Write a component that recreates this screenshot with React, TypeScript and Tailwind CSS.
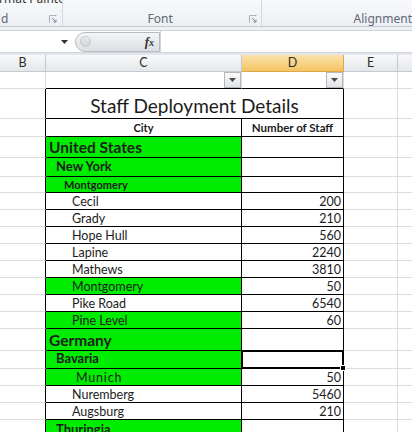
import type { ReactNode } from 'react'

type Level = 'country' | 'state' | 'sub' | 'city' | 'spaced'

interface Line {
  label: string
  value?: string
  level: Level
  h: string
  green?: boolean
  selected?: boolean
}

// Row heights are written out in full so Tailwind picks them up.
const lines: Line[] = [
  { label: 'United States', level: 'country', h: 'h-[21px]', green: true },
  { label: 'New York', level: 'state', h: 'h-[19px]', green: true },
  { label: 'Montgomery', level: 'sub', h: 'h-[16px]', green: true },
  { label: 'Cecil', value: '200', level: 'city', h: 'h-[17px]' },
  { label: 'Grady', value: '210', level: 'city', h: 'h-[17px]' },
  { label: 'Hope Hull', value: '560', level: 'city', h: 'h-[17px]' },
  { label: 'Lapine', value: '2240', level: 'city', h: 'h-[17px]' },
  { label: 'Mathews', value: '3810', level: 'city', h: 'h-[17px]' },
  { label: 'Montgomery', value: '50', level: 'city', h: 'h-[17px]', green: true },
  { label: 'Pike Road', value: '6540', level: 'city', h: 'h-[17px]' },
  { label: 'Pine Level', value: '60', level: 'city', h: 'h-[17px]', green: true },
  { label: 'Germany', level: 'country', h: 'h-[22px]', green: true },
  { label: 'Bavaria', level: 'state', h: 'h-[18px]', green: true, selected: true },
  { label: 'Munich', value: '50', level: 'spaced', h: 'h-[17px]', green: true },
  { label: 'Nuremberg', value: '5460', level: 'city', h: 'h-[17px]' },
  { label: 'Augsburg', value: '210', level: 'city', h: 'h-[17px]' },
  { label: 'Thuringia', level: 'state', h: 'h-[20px]', green: true },
]

const levelClass: Record<Level, string> = {
  country: 'pl-[3px] text-[15.5px] font-bold pb-[2px]',
  state: 'pl-[10px] text-[13px] font-bold pb-[3px]',
  sub: 'pl-[18px] text-[11px] font-bold pb-[2px]',
  city: 'pl-[26px] text-[12.5px] pb-[1px]',
  spaced: 'pl-[30px] text-[12.5px] tracking-[0.8px] pb-[1px]',
}

const cols = 'grid grid-cols-[46px_196px_102px_54px_1fr]'
const grid = 'border-r border-b border-[#dadcdd]'

function Launcher() {
  return (
    <svg width="8" height="8" viewBox="0 0 8 8" className="shrink-0">
      <path d="M0.5 7.5V0.5H7.5" fill="none" stroke="#a9b1bb" />
      <path d="M3 3L7 7M4.5 7H7V4.5" fill="none" stroke="#7d8793" />
    </svg>
  )
}

function Ribbon() {
  return (
    <div className="h-[27px] flex border-b border-[#c3cad3] bg-gradient-to-b from-[#f8f9fb] to-[#eceff3] text-[12px] leading-none text-[#5f6975] font-['Noto_Sans',sans-serif] overflow-hidden">
      <div className="w-[66px] flex flex-col border-r border-[#d2d7de] overflow-hidden">
        <div className="h-[11px] overflow-hidden">
          <div className="-mt-[7px] -ml-[1px] whitespace-nowrap text-[#333]">rmat Painter</div>
        </div>
        <div className="flex-1 flex items-center justify-between pl-[1px] pr-[5px]">
          <span>d</span>
          <Launcher />
        </div>
      </div>
      <div className="w-[210px] flex flex-col border-r border-[#d2d7de]">
        <div className="h-[11px]" />
        <div className="flex-1 flex items-center pr-[4px]">
          <span className="pl-[85px] flex-1">Font</span>
          <Launcher />
        </div>
      </div>
      <div className="flex-1 flex flex-col">
        <div className="h-[11px]" />
        <div className="flex-1 flex items-center pl-[92px] whitespace-nowrap">Alignment</div>
      </div>
    </div>
  )
}

function FormulaBar() {
  return (
    <>
      <div className="h-[3px] bg-[#eef1f4]" />
      <div className="h-[23px] flex items-center bg-white border-t border-b border-[#d0d5db]">
        <div className="w-[75px] flex justify-end pr-[7px]">
          <svg width="7" height="4" viewBox="0 0 7 4">
            <path d="M0 0H7L3.5 4Z" fill="#333" />
          </svg>
        </div>
        <div className="w-[85px] h-[20px] flex items-center justify-between rounded-l-[11px] border border-[#b7bcc3] bg-gradient-to-b from-[#f4f5f7] to-[#dcdfe3] pl-[4px] pr-[5px]">
          <div className="w-[11px] h-[11px] rounded-full border border-[#c3c7cc] bg-gradient-to-b from-[#e9ebee] to-[#cfd3d8]" />
          <span className="font-['Liberation_Serif',serif] italic font-bold text-[13px] leading-none text-[#333]">
            f<span className="text-[10px]">x</span>
          </span>
        </div>
        <div className="flex-1 h-full border-l border-[#d0d5db]" />
      </div>
      <div className="h-[2px] bg-[#e3e7ec]" />
    </>
  )
}

function ColumnHeaders() {
  const head = 'flex items-center justify-center border-r border-b border-[#c4c9cf] bg-gradient-to-b from-[#f8f9fa] to-[#e4e7eb]'
  return (
    <div className={`${cols} h-[17px] text-[12.5px] leading-none text-[#2e2e2e]`}>
      <div className={head}>B</div>
      <div className={head}>C</div>
      <div className="flex items-center justify-center border-r border-b border-[#e0a74e] bg-gradient-to-b from-[#fbe2a9] to-[#f3c561]">D</div>
      <div className={head}>E</div>
      <div className={`${head} border-r-0`} />
    </div>
  )
}

function FilterButton() {
  return (
    <div className="w-[17px] h-full flex items-center justify-center border border-[#b5b9be] bg-gradient-to-b from-[#fbfbfb] to-[#e1e3e6]">
      <svg width="7" height="4" viewBox="0 0 7 4">
        <path d="M0 0H7L3.5 4Z" fill="#4a4a4a" />
      </svg>
    </div>
  )
}

function Row({ h, children }: { h: string; children: ReactNode }) {
  return (
    <div className={`${cols} ${h}`}>
      <div className="border-r border-b border-r-black border-b-[#dadcdd]" />
      {children}
      <div className={grid} />
      <div className="border-b border-[#dadcdd]" />
    </div>
  )
}

export default function App() {
  return (
    <div className="w-[412px] h-[432px] overflow-hidden bg-white font-['Lato',sans-serif] text-[#1c1c1c]">
      <Ribbon />
      <FormulaBar />
      <ColumnHeaders />

      <div className={`${cols} h-[17px]`}>
        <div className={grid} />
        <div className="flex justify-end border-r border-b border-r-[#dadcdd] border-b-black">
          <FilterButton />
        </div>
        <div className="flex justify-end border-r border-b border-r-[#dadcdd] border-b-black">
          <FilterButton />
        </div>
        <div className={grid} />
        <div className="border-b border-[#dadcdd]" />
      </div>

      <div className={`${cols} h-[30px]`}>
        <div className="border-r border-b border-r-black border-b-[#dadcdd]" />
        <div className="col-span-2 flex items-end justify-center border-r border-b border-black pb-[3px] text-[19px] leading-none">
          Staff Deployment Details
        </div>
        <div className={grid} />
        <div className="border-b border-[#dadcdd]" />
      </div>

      <Row h="h-[18px]">
        <div className="flex items-end justify-center border-r border-b border-black pb-[3px] text-[11px] font-bold leading-none">City</div>
        <div className="flex items-end justify-center border-r border-b border-black pb-[3px] text-[11.5px] font-bold leading-none">Number of Staff</div>
      </Row>

      {lines.map((l, i) => (
        <Row key={i} h={l.h}>
          <div
            className={`flex items-end whitespace-nowrap border-r border-b border-black leading-none ${levelClass[l.level]} ${l.green ? 'bg-[#00ec00]' : 'bg-white'}`}
          >
            {l.label}
          </div>
          <div className="relative flex items-end justify-end border-r border-b border-black pr-[2px] pb-[1px] text-[12.5px] leading-none">
            {l.value}
            {l.selected && (
              <div className="absolute -left-[1px] -top-[1px] -right-[1px] -bottom-[1px] z-10 border-2 border-black">
                <div className="absolute -right-[4px] -bottom-[4px] w-[6px] h-[6px] bg-black border border-white" />
              </div>
            )}
          </div>
        </Row>
      ))}
    </div>
  )
}
